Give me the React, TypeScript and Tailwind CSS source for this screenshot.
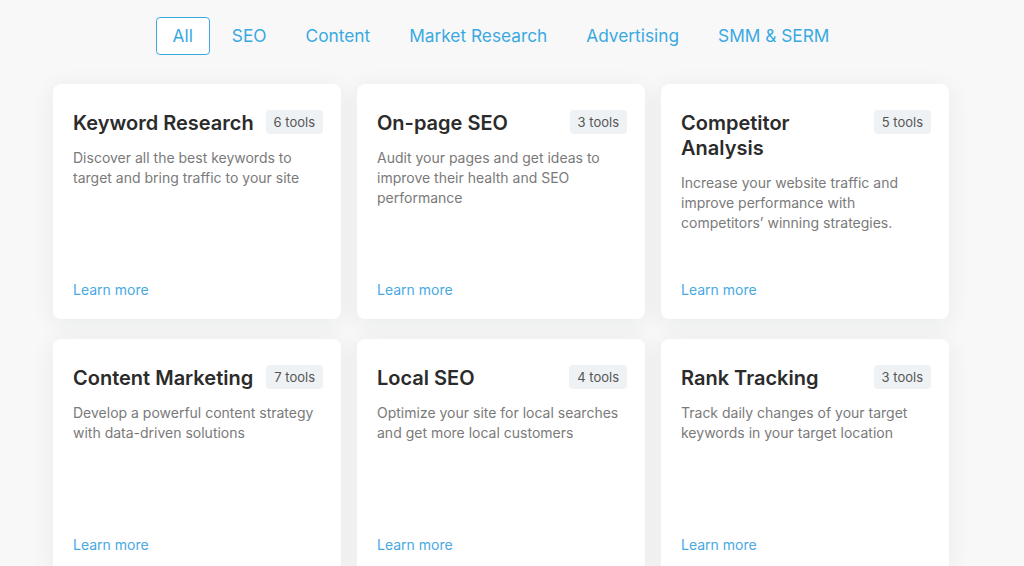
const tabs = ['All', 'SEO', 'Content', 'Market Research', 'Advertising', 'SMM & SERM']

interface Category {
  title: string
  tools: number
  description: string
}

const categories: Category[] = [
  {
    title: 'Keyword Research',
    tools: 6,
    description: 'Discover all the best keywords to target and bring traffic to your site',
  },
  {
    title: 'On-page SEO',
    tools: 3,
    description: 'Audit your pages and get ideas to improve their health and SEO performance',
  },
  {
    title: 'Competitor Analysis',
    tools: 5,
    description:
      'Increase your website traffic and improve performance with competitors’ winning strategies.',
  },
  {
    title: 'Content Marketing',
    tools: 7,
    description: 'Develop a powerful content strategy with data-driven solutions',
  },
  {
    title: 'Local SEO',
    tools: 4,
    description: 'Optimize your site for local searches and get more local customers',
  },
  {
    title: 'Rank Tracking',
    tools: 3,
    description: 'Track daily changes of your target keywords in your target location',
  },
]

function CategoryCard({ category }: { category: Category }) {
  return (
    <div className="flex h-[235px] flex-col rounded-lg bg-white pt-[26px] pr-[18px] pb-[19px] pl-5 shadow-[0_4px_24px_rgba(30,40,60,0.07)]">
      {/* Header: title and tool count */}
      <div className="flex items-start gap-2">
        <h3 className="min-w-0 flex-1 pt-px text-[20px] leading-[25px] font-semibold text-[#2b2b2b]">
          {category.title}
        </h3>
        <span className="shrink-0 rounded bg-[#eef2f5] px-2 text-[13px] leading-6 text-[#555]">
          {category.tools} tools
        </span>
      </div>

      <p className="mt-3 pr-[2px] text-[14px] leading-5 text-[#7a7a7a]">{category.description}</p>

      <a href="#" className="mt-auto text-[14px] leading-5 text-[#48a9e3]">
        Learn more
      </a>
    </div>
  )
}

export default function App() {
  return (
    <div
      className="min-h-screen bg-[#f8f8f8] pt-[17px]"
      style={{ fontFamily: 'Inter, "Noto Sans", sans-serif' }}
    >
      <div className="ml-[53px] w-[896px]">
        {/* Category filter */}
        <nav className="flex justify-center gap-[5px]">
          {tabs.map((tab, i) => (
            <button
              key={tab}
              type="button"
              className={`h-[38px] rounded px-4 text-[17.3px] text-[#3aa9e2] ${
                i === 0 ? 'border-[1.5px] border-[#3aa9e2] bg-white' : 'border-[1.5px] border-transparent'
              }`}
            >
              {tab}
            </button>
          ))}
        </nav>

        <div className="mt-[29px] grid grid-cols-3 gap-x-4 gap-y-5">
          {categories.map((c) => (
            <CategoryCard key={c.title} category={c} />
          ))}
        </div>
      </div>
    </div>
  )
}
